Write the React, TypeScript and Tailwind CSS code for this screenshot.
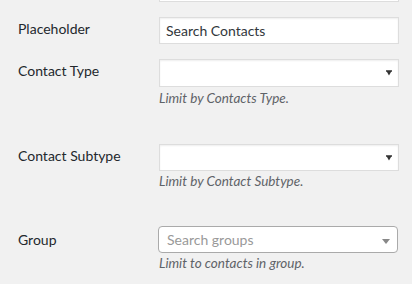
import React from 'react'

const font = { fontFamily: 'Lato, "Open Sans", sans-serif' }

function Arrow() {
  return (
    <svg width="6" height="6" viewBox="0 0 6 6" className="absolute right-[6px] top-1/2 -translate-y-1/2">
      <rect x="0" y="0.3" width="6" height="1.3" fill="#222" />
      <path d="M0.4 1 L5.6 1 L3 5.6 Z" fill="#333" />
    </svg>
  )
}

function Row({ label, labelTop, children }: { label: string; labelTop: number; children: React.ReactNode }) {
  return (
    <div className="flex items-start">
      <div className="w-[159px] shrink-0 pl-[18px] text-[14px] leading-[20px] text-[#23282d]" style={{ paddingTop: labelTop }}>
        {label}
      </div>
      <div className="w-[240px]">{children}</div>
    </div>
  )
}

function Desc({ children, mt = 'mt-[3px]' }: { children: React.ReactNode; mt?: string }) {
  return <p className={`${mt} text-[13.5px] leading-[17px] italic text-[#5f6368]`}>{children}</p>
}

export default function App() {
  return (
    <div className="w-[412px] h-[284px] overflow-hidden bg-[#f1f1f1]" style={font}>
      {/* cut-off input above */}
      <div className="ml-[159px] w-[240px] h-[27px] -mt-[25px] bg-white border border-[#ddd]" />

      <div className="mt-[15px]">
        <Row label="Placeholder" labelTop={2}>
          <input
            readOnly
            value="Search Contacts"
            className="block w-full h-[27px] px-[6px] bg-white border border-[#ddd] shadow-[inset_0_1px_2px_rgba(0,0,0,0.07)] text-[14px] text-[#32373c] outline-none"
            style={font}
          />
        </Row>
      </div>

      <div className="mt-[15px]">
        <Row label="Contact Type" labelTop={2}>
          <div className="relative h-[28px] bg-white border border-[#ddd] shadow-[inset_0_1px_2px_rgba(0,0,0,0.07)]">
            <Arrow />
          </div>
          <Desc>Limit by Contacts Type.</Desc>
        </Row>
      </div>

      <div className="mt-[37px]">
        <Row label="Contact Subtype" labelTop={2}>
          <div className="relative h-[27px] bg-white border border-[#ddd] shadow-[inset_0_1px_2px_rgba(0,0,0,0.07)]">
            <Arrow />
          </div>
          <Desc mt="mt-[2px]">Limit by Contact Subtype.</Desc>
        </Row>
      </div>

      <div className="mt-[36px]">
        <Row label="Group" labelTop={4}>
          <div className="relative -ml-px w-[240px] h-[27px] flex items-center pl-[8px] bg-white border border-[#aaa] rounded-[4px] text-[14px] text-[#999]">
            Search groups
            <span className="absolute right-[7px] top-[12px] w-0 h-0 border-x-[4px] border-x-transparent border-t-[5px] border-t-[#888]" />
          </div>
          <Desc mt="mt-[2px]">Limit to contacts in group.</Desc>
        </Row>
      </div>
    </div>
  )
}
